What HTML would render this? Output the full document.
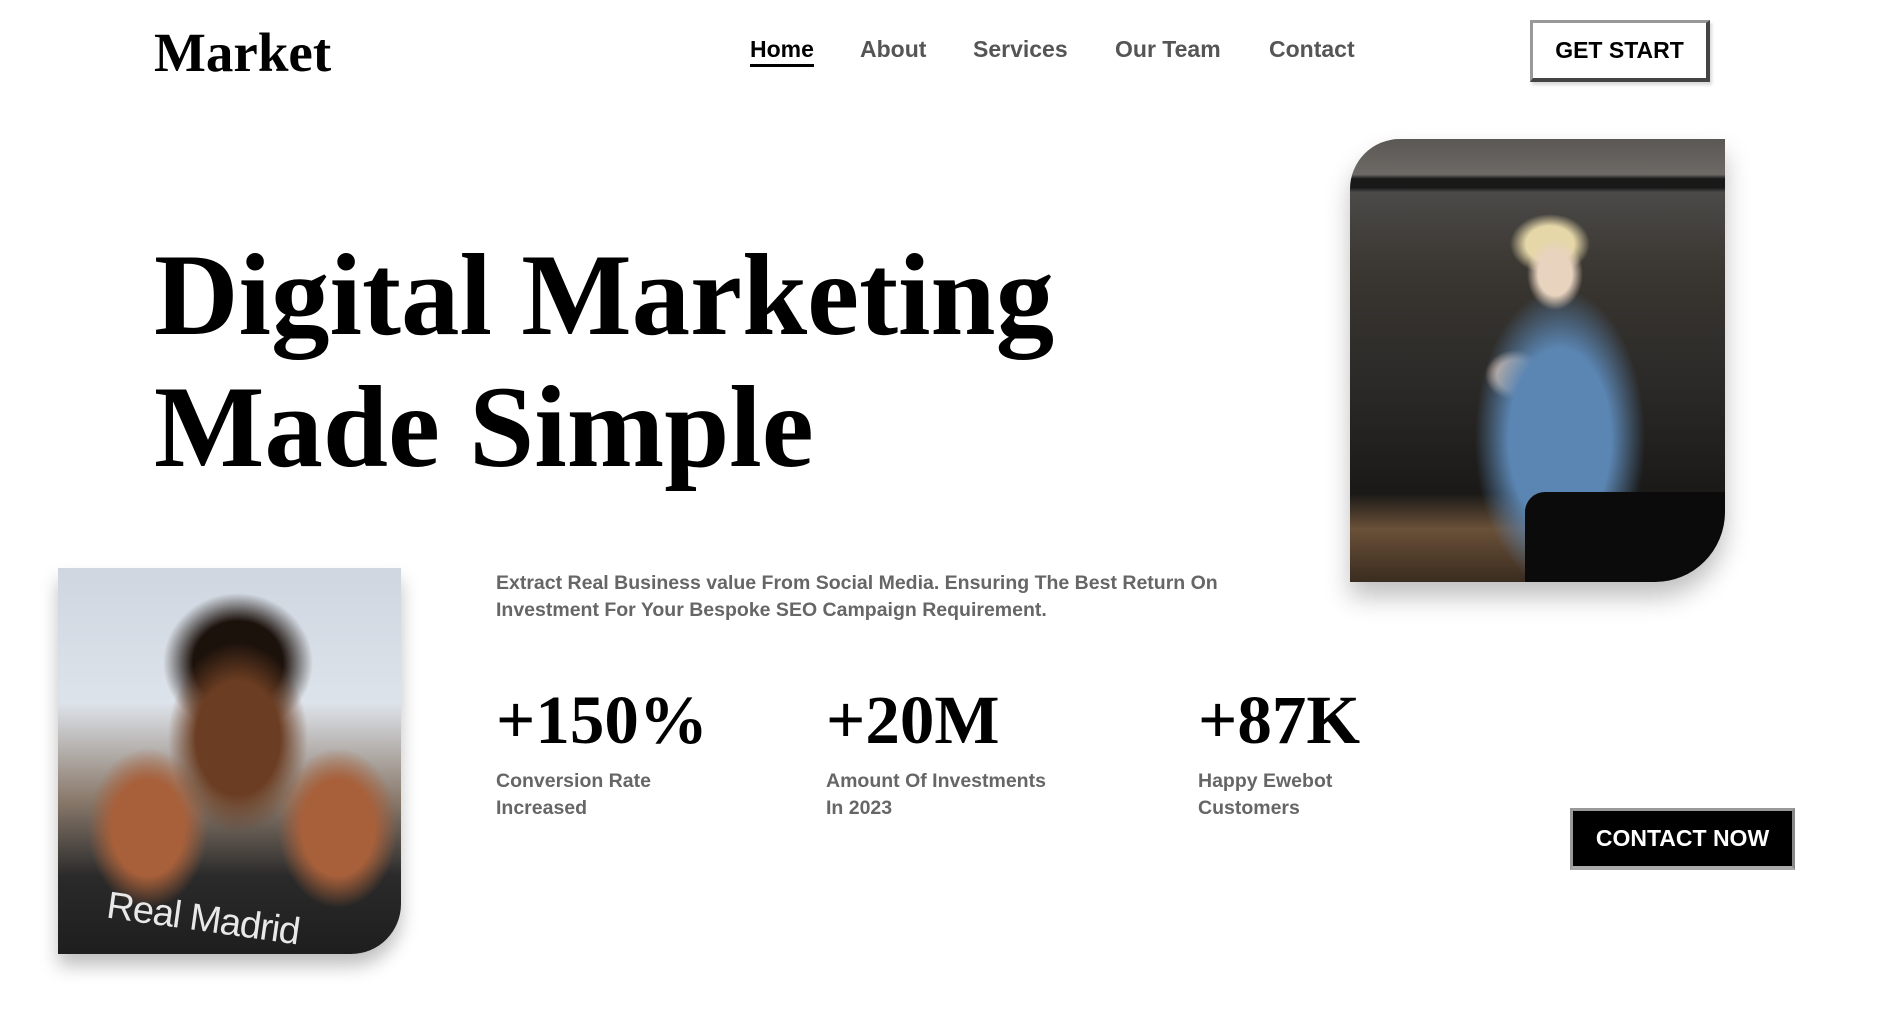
<!DOCTYPE html>
<html><head><style>
*{margin:0;padding:0;box-sizing:border-box}
body{width:1886px;height:1027px;background:#fff;position:relative;overflow:hidden;font-family:"Liberation Sans",Arial,sans-serif}
.abs{position:absolute}
.logo{left:154px;top:18px;font:bold 55px "Liberation Serif",serif;color:#000;line-height:70px}
.nav a{position:absolute;top:35px;font-weight:bold;font-size:23px;color:#555;text-decoration:none;line-height:28px}
.nav a.home{color:#000}
.nav a.home:after{content:"";position:absolute;left:0;right:0;top:29px;height:3px;background:#000}
.btn1{left:1530px;top:20px;width:180px;height:62px;border:3px solid #999;border-right:4px solid #444;border-bottom:4px solid #444;font-weight:bold;font-size:23px;display:flex;align-items:center;justify-content:center;color:#000;box-shadow:2px 3px 3px rgba(0,0,0,.15)}
.h1{left:154px;top:230px;font:bold 117px/132px "Liberation Serif",serif;color:#000;white-space:nowrap}
.p{left:496px;top:570px;width:780px;font-weight:bold;font-size:19.5px;line-height:27px;color:#666}
.num{top:680px;font:bold 69px/80px "Liberation Serif",serif;color:#000}
.lab{top:768px;font-weight:bold;font-size:19.5px;line-height:27px;color:#666}
.btn2{left:1570px;top:808px;width:225px;height:62px;background:#000;border:3px solid #999;border-right:3px solid #888;border-bottom:4px solid #aaa;color:#fff;font-weight:bold;font-size:23px;display:flex;align-items:center;justify-content:center}
.woman{left:1350px;top:139px;width:375px;height:443px;border-radius:50px 0 70px 0;overflow:hidden;box-shadow:0 15px 25px rgba(0,0,0,.25);
background:
radial-gradient(ellipse 28px 36px at 205px 135px,#e8d3bf 60%,transparent 100%),
radial-gradient(ellipse 40px 30px at 200px 105px,#e6d7a8 60%,transparent 100%),
radial-gradient(ellipse 85px 150px at 210px 300px,#5b86b3 60%,transparent 100%),
radial-gradient(ellipse 30px 25px at 165px 236px,#d8b8a0 60%,transparent 100%),
linear-gradient(180deg,#5a5754 0,#6d6a66 8%,#191919 9%,#191919 11%,#4b4a48 12%,#3a3631 30%,#2b2a28 55%,#1a1917 80%,#6a5038 88%,#3a2c20 100%)}
.woman:after{content:"";position:absolute;right:0;bottom:0;width:200px;height:90px;background:#0b0b0b;border-radius:20px 0 70px 0}
.man{left:58px;top:568px;width:343px;height:386px;border-radius:0 0 50px 0;overflow:hidden;box-shadow:0 12px 18px rgba(0,0,0,.25);
background:
radial-gradient(ellipse 70px 95px at 180px 170px,#6b3d22 60%,transparent 100%),
radial-gradient(ellipse 75px 70px at 180px 95px,#1c120c 60%,transparent 100%),
radial-gradient(ellipse 60px 80px at 90px 260px,#a8603a 60%,transparent 100%),
radial-gradient(ellipse 60px 80px at 280px 260px,#a8603a 60%,transparent 100%),
linear-gradient(180deg,#cfd6e0 0,#dde3ea 35%,#8a7a6c 60%,#2a2a2a 80%,#1e1e1e 100%)}
.mantxt{position:absolute;left:48px;top:330px;color:#e8e8e8;font-size:38px;transform:rotate(8deg);letter-spacing:-1px}
</style></head><body>
<div class="abs logo">Market</div>
<div class="nav">
<a class="home" style="left:750px">Home</a>
<a style="left:860px">About</a>
<a style="left:973px">Services</a>
<a style="left:1115px">Our Team</a>
<a style="left:1269px">Contact</a>
</div>
<div class="abs btn1">GET START</div>
<div class="abs h1">Digital Marketing<br>Made Simple</div>
<div class="abs woman"></div>
<div class="abs man"><span class="mantxt">Real Madrid</span></div>
<div class="abs p">Extract Real Business value From Social Media. Ensuring The Best Return On Investment For Your Bespoke SEO Campaign Requirement.</div>
<div class="abs num" style="left:496px">+150%</div>
<div class="abs num" style="left:826px">+20M</div>
<div class="abs num" style="left:1198px">+87K</div>
<div class="abs lab" style="left:496px">Conversion Rate<br>Increased</div>
<div class="abs lab" style="left:826px">Amount Of Investments<br>In 2023</div>
<div class="abs lab" style="left:1198px">Happy Ewebot<br>Customers</div>
<div class="abs btn2">CONTACT NOW</div>
</body></html>
